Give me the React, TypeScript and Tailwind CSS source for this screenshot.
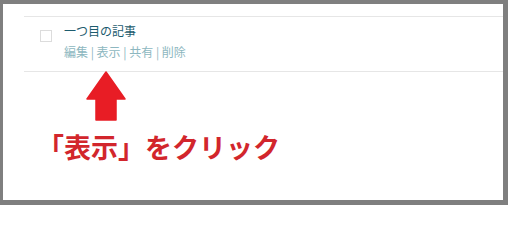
import React from "react";

export default function App() {
  return (
    <div className="w-[508px] h-[205px] box-border border-solid border-[#7f7f7f] border-t-4 border-l-[3px] border-r-[5px] border-b-[5px] bg-white overflow-hidden" style={{ fontFamily: '"Noto Sans CJK JP", "Noto Sans", sans-serif' }}>
      <div className="pl-[21px] pt-[12px]">
        <div className="border-t border-b border-[#e6e6e6] pt-[5px] pb-[10px] flex items-start">
          <div className="ml-[16px] mt-[8px] w-[12px] h-[12px] border border-[#dcdcdc] bg-white" />
          <div className="ml-[12px] text-[12px]">
            <div className="leading-[18px] text-[#1d5c6e]">一つ目の記事</div>
            <div className="mt-[3px] leading-[18px] text-[#8db7c0]">
              編集 | 表示 | 共有 | 削除
            </div>
          </div>
        </div>
        <div className="ml-[62px] -mt-px">
          <svg width="40" height="50" viewBox="-1 -1 40 50" className="block">
            <path
              d="M19 0 L0 27 L9 27 L9 48 L29 48 L29 27 L38 27 Z"
              fill="#e81d25"
              stroke="#e81d25"
              strokeWidth="1.5"
              strokeLinejoin="round"
            />
          </svg>
        </div>
        <div className="ml-[13px] mt-[10px] text-[27px] leading-[31px] font-bold text-[#d2262c] whitespace-nowrap">
          「表示」をクリック
        </div>
      </div>
    </div>
  );
}
